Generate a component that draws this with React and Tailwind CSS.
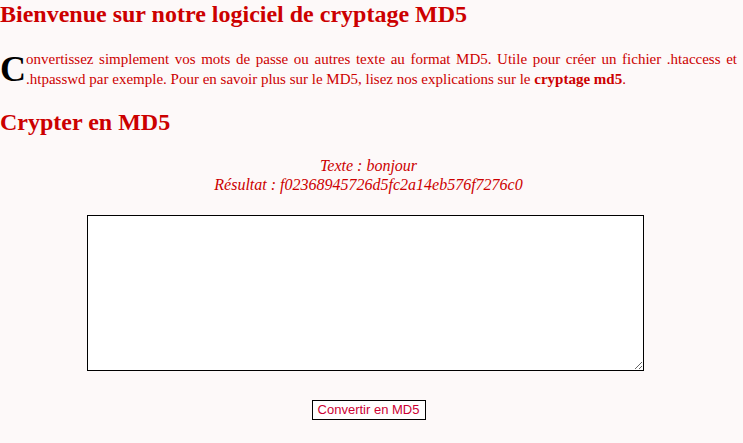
import React from "react";

export default function App() {
  return (
    <div className="min-h-screen bg-[#fdf9f9] pr-[6px] font-['Liberation_Serif',serif] text-[#cc0000]">
      <h1 className="m-0 text-[24px] font-bold leading-[28px]">Bienvenue sur notre logiciel de cryptage MD5</h1>

      <p className="mt-[21px] text-justify text-[15px] leading-[20px]">
        <span className="float-left text-[36px] font-bold leading-[40px] text-black">C</span>
        onvertissez simplement vos mots de passe ou autres texte au format MD5. Utile pour créer un fichier .htaccess et
        .htpasswd par exemple. Pour en savoir plus sur le MD5, lisez nos explications sur le{" "}
        <strong className="font-bold">cryptage md5</strong>.
      </p>

      <h2 className="mt-[19px] text-[24px] font-bold leading-[28px]">Crypter en MD5</h2>

      <div className="mt-[20px] text-center text-[16px] italic leading-[19px]">
        <div>Texte : bonjour</div>
        <div>Résultat : f02368945726d5fc2a14eb576f7276c0</div>
      </div>

      <div className="mt-[21px]">
        <textarea className="ml-[87px] block h-[156px] w-[557px] border border-black bg-white" />
      </div>

      <div className="mt-[26px] text-center">
        <button className="h-[20px] w-[114px] border border-black bg-white font-['Liberation_Sans',sans-serif] text-[13px] leading-[18px] text-[#cc0033]">
          Convertir en MD5
        </button>
      </div>
    </div>
  );
}
